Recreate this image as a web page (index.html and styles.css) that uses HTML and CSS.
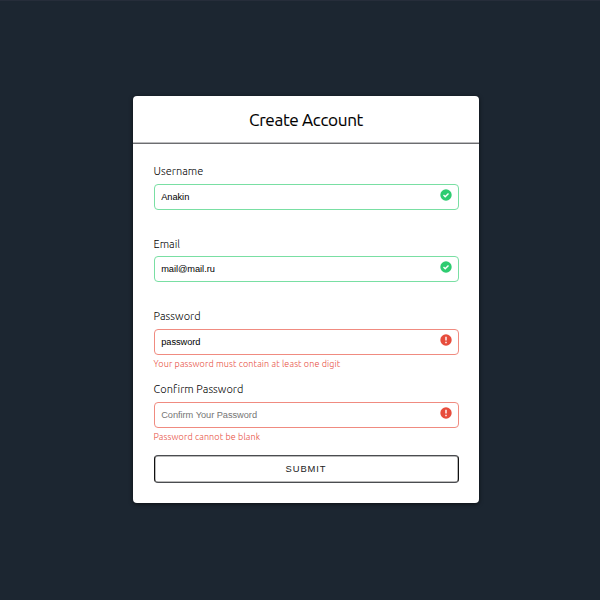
FILE: index.html
```html
<!DOCTYPE html>
<html lang="en">
<head>
<meta charset="utf-8">
<title>Create Account</title>
<link rel="stylesheet" href="styles.css">
</head>
<body>
<main class="card">
  <header class="header"><h1>Create Account</h1></header>
  <form class="form">
    <div class="field success">
      <label for="username">Username</label>
      <input id="username" type="text" value="Anakin">
      <svg class="icon" viewBox="0 0 12 12"><circle cx="6" cy="6" r="5.7"/><path d="M3.5 6.1 5.2 7.7 8.5 4.4"/></svg>
    </div>
    <div class="field success">
      <label for="email">Email</label>
      <input id="email" type="text" value="mail@mail.ru">
      <svg class="icon" viewBox="0 0 12 12"><circle cx="6" cy="6" r="5.7"/><path d="M3.5 6.1 5.2 7.7 8.5 4.4"/></svg>
    </div>
    <div class="field error">
      <label for="password">Password</label>
      <input id="password" type="text" value="password">
      <svg class="icon" viewBox="0 0 12 12"><circle cx="6" cy="6" r="5.7"/><path d="M6 2.8v3.8M6 7.7v1.5"/></svg>
      <small>Your password must contain at least one digit</small>
    </div>
    <div class="field error">
      <label for="confirm">Confirm Password</label>
      <input id="confirm" type="text" placeholder="Confirm Your Password">
      <svg class="icon" viewBox="0 0 12 12"><circle cx="6" cy="6" r="5.7"/><path d="M6 2.8v3.8M6 7.7v1.5"/></svg>
      <small>Password cannot be blank</small>
    </div>
    <button type="button">SUBMIT</button>
  </form>
</main>
</body>
</html>
```
FILE: styles.css
```css
* { box-sizing: border-box; }

body {
  margin: 0;
  min-height: 100vh;
  display: flex;
  justify-content: center;
  padding: 95px 0 0 12px;
  background: #1c2631;
  border-top: 1px solid #262d3a;
  font-family: Ubuntu, "Noto Sans", sans-serif;
  color: #000;
}

.card {
  width: 346px;
  height: 407px;
  background: #fff;
  border-radius: 4px;
  box-shadow: 0 1px 4px rgba(0, 0, 0, 0.6);
}

.header {
  height: 48px;
  border-bottom: 1px solid #6c6d70;
  box-shadow: inset 0 -1px #bdbdbf;
  text-align: center;
}

h1 {
  margin: 0;
  font-size: 17.2px;
  font-weight: 400;
  line-height: 47px;
  letter-spacing: -0.35px;
  -webkit-text-stroke: 0.1px #000;
}

.form { padding: 20px 20.5px 0 20.5px; }

.field {
  position: relative;
  height: 72.7px;
}

label {
  display: block;
  height: 19.5px;
  font-size: 11px;
  font-weight: 300;
  line-height: 15px;
  letter-spacing: 0.05px;
  white-space: nowrap;
}

input {
  display: block;
  width: 100%;
  height: 26px;
  padding: 0 6.7px;
  border: 1px solid;
  border-radius: 4px;
  outline: none;
  background: #fff;
  color: #000;
  font: 9.25px "Liberation Sans", Arial, sans-serif;
  letter-spacing: -0.04px;
}

input::placeholder { color: #757575; opacity: 1; }

.success input { border-color: #79dfa3; }
.error input { border-color: #f08b80; }

.icon {
  position: absolute;
  top: 24.6px;
  right: 7px;
  width: 12px;
  height: 12px;
}

.icon path { fill: none; stroke: #fff; stroke-width: 1.4; }
.success circle { fill: #2ecc71; }
.error circle { fill: #e74c3c; }

small {
  display: block;
  margin-top: 3px;
  font-size: 9px;
  font-weight: 300;
  line-height: 12px;
  letter-spacing: 0.13px;
  color: #e74c3c;
  white-space: nowrap;
}

button {
  display: block;
  width: 100%;
  height: 28px;
  padding: 0;
  border: 1px solid #4a4c50;
  border-left-color: #111;
  border-right-color: #111;
  border-radius: 4px;
  box-shadow: inset 0 0 0 0.5px #777;
  background: #fff;
  color: #222;
  font: 9.4px "Liberation Sans", Arial, sans-serif;
  letter-spacing: 0.9px;
}
```
